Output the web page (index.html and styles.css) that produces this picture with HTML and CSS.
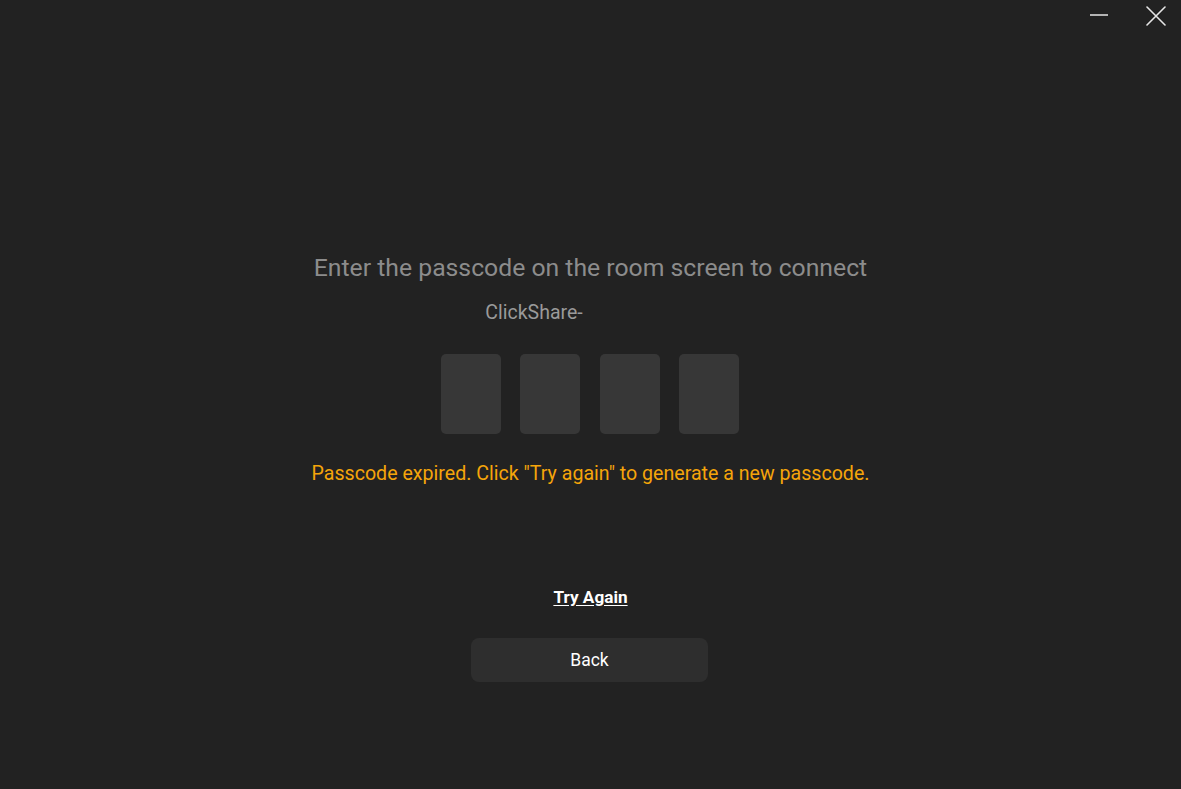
FILE: index.html
```html
<!DOCTYPE html>
<html>
<head>
<meta charset="utf-8">
<link rel="stylesheet" href="styles.css">
</head>
<body>
<div class="window">
  <div class="titlebar">
    <button class="winbtn min" aria-label="Minimize">
      <svg width="18" height="18" viewBox="0 0 18 18"><line x1="0.5" y1="9" x2="17.5" y2="9" stroke="#e6e6e6" stroke-width="1.6" stroke-linecap="round"/></svg>
    </button>
    <button class="winbtn close" aria-label="Close">
      <svg width="20" height="20" viewBox="0 0 20 20"><path d="M1 1 L19 19 M19 1 L1 19" stroke="#e6e6e6" stroke-width="1.6" stroke-linecap="round"/></svg>
    </button>
  </div>
  <main class="content">
    <h1 class="title">Enter the passcode on the room screen to connect</h1>
    <div class="device">ClickShare-</div>
    <div class="boxes">
      <div class="box"></div>
      <div class="box"></div>
      <div class="box"></div>
      <div class="box"></div>
    </div>
    <p class="error">Passcode expired. Click "Try again" to generate a new passcode.</p>
    <a class="retry" href="#">Try Again</a>
    <button class="back">Back</button>
  </main>
</div>
</body>
</html>
```

FILE: styles.css
```css
html, body {
  margin: 0;
  padding: 0;
  height: 100%;
  background: #222222;
  font-family: Roboto, "Noto Sans", sans-serif;
}
.window {
  height: 789px;
  display: flex;
  flex-direction: column;
}
.titlebar {
  display: flex;
  justify-content: flex-end;
  align-items: center;
  height: 32px;
  padding-right: 15px;
  gap: 38px;
}
.winbtn {
  background: none;
  border: none;
  padding: 0;
  display: flex;
  align-items: center;
  justify-content: center;
  cursor: pointer;
}
.winbtn.min { margin-top: -3px; }
.winbtn.close { margin-top: -1px; }
.content {
  display: flex;
  flex-direction: column;
  align-items: center;
  padding-top: 221px;
}
.title {
  margin: 0;
  font-weight: 400;
  font-size: 24.75px;
  line-height: 30px;
  color: #8c8c8c;
}
.device {
  margin-top: 18px;
  margin-right: 113px;
  font-size: 19.5px;
  line-height: 24px;
  color: #9a9a9a;
}
.boxes {
  display: flex;
  gap: 19.3px;
  margin-top: 29px;
  margin-right: 1px;
}
.box {
  width: 60px;
  height: 80px;
  background: #373737;
  border-radius: 5px;
}
.error {
  margin: 28px 0 0;
  font-size: 19.6px;
  line-height: 24px;
  color: #f5a50a;
}
.retry {
  margin-top: 101px;
  font-size: 17.2px;
  font-weight: 700;
  line-height: 20px;
  color: #ffffff;
  text-decoration: underline;
  text-underline-offset: 2px;
}
.back {
  margin-top: 31px;
  margin-right: 2px;
  width: 237px;
  height: 44px;
  background: #2e2e2e;
  border: none;
  border-radius: 8px;
  color: #ffffff;
  font-family: Roboto, "Noto Sans", sans-serif;
  font-size: 17.5px;
}
```
